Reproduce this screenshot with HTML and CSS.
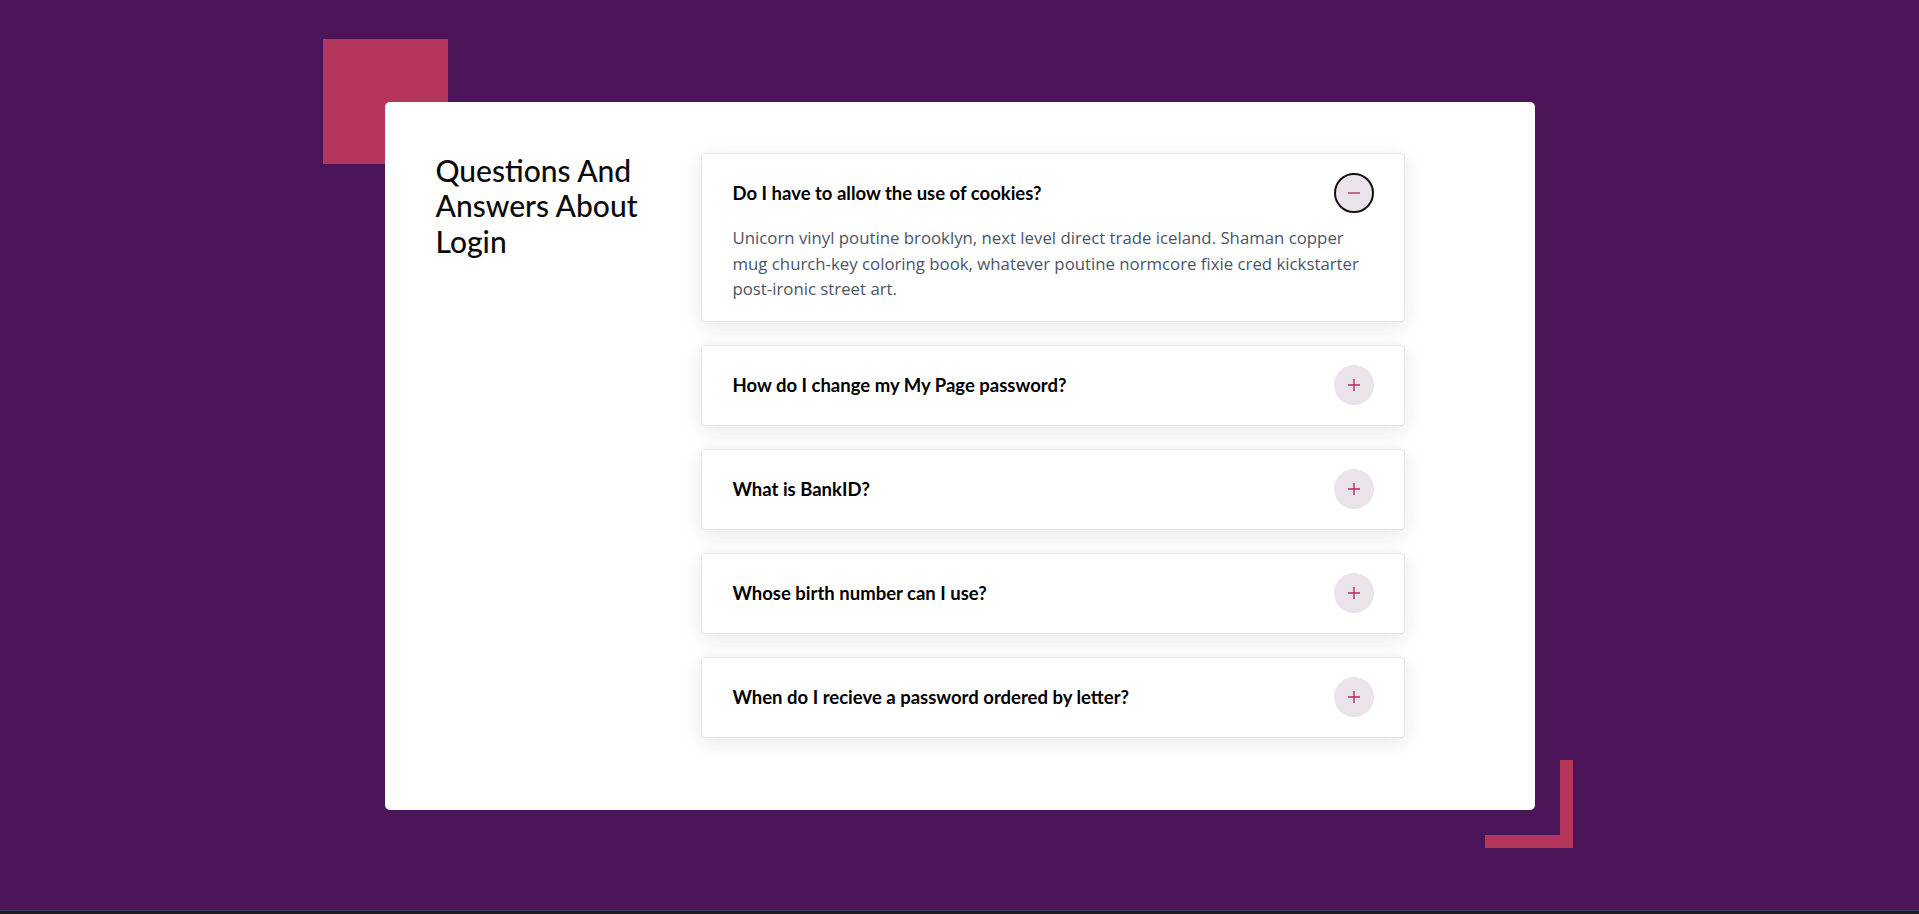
FILE: index.html
```html
<!DOCTYPE html>
<html lang="en">
<head>
<meta charset="utf-8">
<title>FAQ - Login</title>
<link rel="stylesheet" href="styles.css">
</head>
<body>
<section class="stage">
  <div class="frame">
    <div class="card">
      <h2 class="heading">Questions And Answers About Login</h2>
      <div class="accordion">
        <div class="item open">
          <div class="item-head">
            <h3 class="question">Do I have to allow the use of cookies?</h3>
            <button class="toggle toggle-active" aria-label="Collapse">
              <svg viewBox="0 0 12 12" width="12" height="12"><path d="M0 6H12" stroke="currentColor" stroke-width="1.4"/></svg>
            </button>
          </div>
          <p class="answer">Unicorn vinyl poutine brooklyn, next level direct trade iceland. Shaman copper mug church-key coloring book, whatever poutine normcore fixie cred kickstarter post-ironic street art.</p>
        </div>
        <div class="item">
          <div class="item-head">
            <h3 class="question">How do I change my My Page password?</h3>
            <button class="toggle" aria-label="Expand">
              <svg viewBox="0 0 12 12" width="12" height="12"><path d="M0 6H12M6 0V12" stroke="currentColor" stroke-width="1.4"/></svg>
            </button>
          </div>
        </div>
        <div class="item">
          <div class="item-head">
            <h3 class="question">What is BankID?</h3>
            <button class="toggle" aria-label="Expand">
              <svg viewBox="0 0 12 12" width="12" height="12"><path d="M0 6H12M6 0V12" stroke="currentColor" stroke-width="1.4"/></svg>
            </button>
          </div>
        </div>
        <div class="item">
          <div class="item-head">
            <h3 class="question">Whose birth number can I use?</h3>
            <button class="toggle" aria-label="Expand">
              <svg viewBox="0 0 12 12" width="12" height="12"><path d="M0 6H12M6 0V12" stroke="currentColor" stroke-width="1.4"/></svg>
            </button>
          </div>
        </div>
        <div class="item">
          <div class="item-head">
            <h3 class="question">When do I recieve a password ordered by letter?</h3>
            <button class="toggle" aria-label="Expand">
              <svg viewBox="0 0 12 12" width="12" height="12"><path d="M0 6H12M6 0V12" stroke="currentColor" stroke-width="1.4"/></svg>
            </button>
          </div>
        </div>
      </div>
    </div>
  </div>
</section>
</body>
</html>
```
FILE: styles.css
```css
*, *::before, *::after { box-sizing: border-box; }
html, body { margin: 0; padding: 0; }
body {
  background: #1f1f23;
  font-family: Lato, "Open Sans", Arial, sans-serif;
  height: 914px;
  overflow: hidden;
}
.stage {
  height: 911px;
  background: #4c1459;
  display: flex;
  align-items: center;
  justify-content: center;
  border-bottom: 1px solid #3d3d6b;
}
.frame {
  position: relative;
  width: 1150px;
  margin-top: 1px;
}
.frame::before {
  content: "";
  position: absolute;
  left: -62px;
  top: -63px;
  width: 125px;
  height: 125px;
  background: #b5365a;
}
.frame::after {
  content: "";
  position: absolute;
  right: -38px;
  bottom: -38px;
  width: 88px;
  height: 88px;
  border-right: 13px solid #b5365a;
  border-bottom: 13px solid #b5365a;
}
.card {
  position: relative;
  z-index: 1;
  background: #fff;
  border-radius: 5px;
  height: 708px;
  padding: 51px 0 0 51px;
  display: flex;
  align-items: flex-start;
}
.heading {
  margin: 0;
  width: 265px;
  padding-right: 40px;
  font-size: 30px;
  line-height: 35.5px;
  font-weight: 500;
  color: #0b0b0b;
}
.accordion {
  width: 704px;
  display: flex;
  flex-direction: column;
  gap: 23px;
}
.item {
  border: 1px solid #e8e2ea;
  border-radius: 4px;
  background: #fff;
  box-shadow: 0 5px 20px rgba(50, 30, 60, 0.11);
}
.item-head {
  display: flex;
  align-items: center;
  justify-content: space-between;
  padding: 19.5px 30px 19.5px 31px;
}
.open .item-head {
  padding-bottom: 0;
}
.question {
  margin: 0;
  font-size: 18.5px;
  font-weight: 700;
  color: #000;
}
.toggle {
  width: 40px;
  height: 40px;
  border-radius: 50%;
  border: none;
  background: #ebe3ea;
  color: #c2275c;
  display: flex;
  align-items: center;
  justify-content: center;
  padding: 0;
  flex: none;
}
.toggle svg { display: block; }
.toggle-active {
  border: 2px solid #111;
  color: #b5365a;
}
.answer {
  margin: 0;
  padding: 12px 41px 19px 31px;
  font-family: "Open Sans", Lato, Arial, sans-serif;
  font-size: 16.8px;
  line-height: 25.5px;
  color: #4a5568;
}
```
